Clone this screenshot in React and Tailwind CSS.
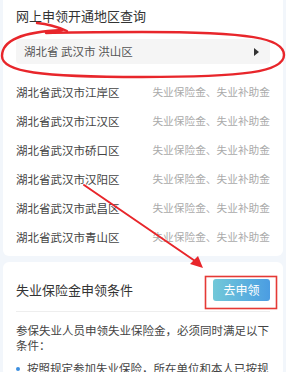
const regions = ['江岸区', '江汉区', '硚口区', '汉阳区', '武昌区', '青山区'];

function Annotations() {
  // hand-drawn red marks over the screenshot
  return (
    <svg className="absolute inset-0 pointer-events-none" width="286" height="372" viewBox="0 0 286 372">
      <g fill="none" stroke="#e8262b" strokeWidth="2.4" strokeLinecap="round" strokeLinejoin="round">
        <path d="M37 23 C48 24 58 27 67 31" />
        <path d="M62 30 C22 32 2 40 2 56 C2 72 40 77 142 77 C244 77 284 72 284 55 C284 38 250 32 142 32 C100 32 72 32 46 33" />
        <path d="M84 185 L198 263" strokeWidth="2" />
      </g>
      <path d="M203 268 L190 264 L198 256 Z" fill="#e8262b" />
      <rect x="205.5" y="276.5" width="71" height="32" fill="none" stroke="#e53935" strokeWidth="1.6" />
    </svg>
  );
}

export default function App() {
  return (
    <div
      className="relative w-[286px] h-[372px] overflow-hidden bg-[#f2f6fb]"
      style={{ fontFamily: '"Noto Sans CJK SC", "Noto Sans", sans-serif' }}
    >
      {/* Region query card */}
      <div className="mx-[3px] bg-white rounded-b-md px-[13px] pt-[6px] pb-[4px]">
        <div className="h-[20px] leading-[20px] text-[13px] text-[#333]">网上申领开通地区查询</div>
        <div className="mt-[13px] h-[25px] rounded-[4px] bg-[#f5f5f5] px-2 flex items-center justify-between">
          <span className="text-[11.5px] text-[#555]">湖北省 武汉市 洪山区</span>
          <span className="w-0 h-0 mr-[3px] border-y-[4px] border-y-transparent border-l-[5px] border-l-[#333]" />
        </div>
        <div className="mt-[14px]">
          {regions.map(r => (
            <div key={r} className="h-[29px] flex items-center justify-between">
              <span className="text-[11.5px] text-[#444]">湖北省武汉市{r}</span>
              <span className="text-[10.7px] text-[#aaa]">失业保险金、失业补助金</span>
            </div>
          ))}
        </div>
      </div>

      {/* Conditions card */}
      <div className="mx-[3px] mt-[6px] bg-white rounded-md px-[13px] pt-[17px]">
        <div className="h-[22px] flex items-center justify-between">
          <span className="text-[13px] text-[#333]">失业保险金申领条件</span>
          <button className="w-[57px] h-[22px] rounded-[3px] bg-gradient-to-r from-[#72c8d8] to-[#4b9de2] text-white text-[12px] leading-none">
            去申领
          </button>
        </div>
        <div className="mt-[10px] border-t border-[#eeeeee]" />
        <p className="mt-[11px] text-[11.5px] leading-[15px] text-[#444]">
          参保失业人员申领失业保险金，必须同时满足以下条件：
        </p>
        <div className="mt-[8px] flex items-start gap-[7px] text-[11.5px] leading-[15px] text-[#444]">
          <span className="mt-[6px] w-[4px] h-[4px] rounded-full bg-[#3d8fe0] shrink-0" />
          <span>按照规定参加失业保险，所在单位和本人已按规</span>
        </div>
      </div>

      <Annotations />
    </div>
  );
}
